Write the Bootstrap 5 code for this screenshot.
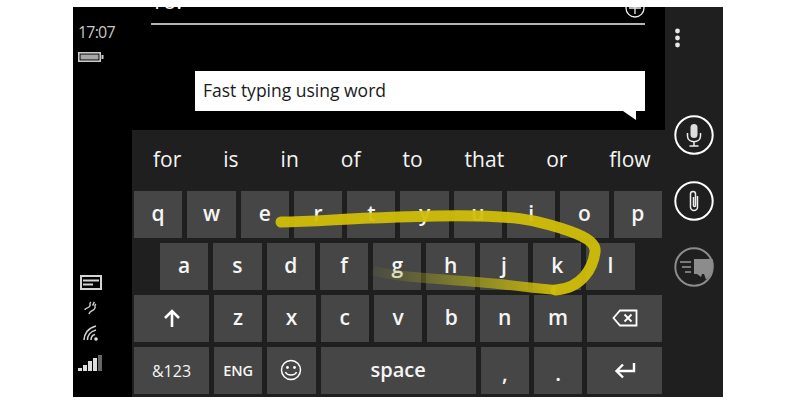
<!DOCTYPE html>
<html lang="en">
<head>
  <meta charset="UTF-8">
  <title>Word flow keyboard</title>
  <link href="https://cdn.jsdelivr.net/npm/bootstrap@5.3.0/dist/css/bootstrap.min.css" rel="stylesheet">
  <style>
    body {
      background: #fff;
      font-family: "Open Sans", "Liberation Sans", sans-serif;
    }
    .phone-frame {
      width: 650px;
      height: 390px;
      margin: 7px 0 0 73px;
      background: #000;
      color: #fff;
      overflow: hidden;
    }
    .status-col {
      width: 59px;
      padding: 16px 0 25px 5px;
      color: #c8c8c8;
    }
    .status-time { font-size: 16px; line-height: 18px; letter-spacing: -0.8px; }
    .status-batt { margin-top: 11px; }
    .status-icons { margin-top: auto; gap: 11px; }

    .centre-col { width: 533px; }
    .thread-area { height: 123px; padding-left: 19px; padding-right: 20px; }
    .to-row {
      height: 18px;
      border-bottom: 2px solid #b4b4b4;
      overflow: hidden;
      font-size: 22px;
    }
    .to-label { line-height: 22px; margin-top: -18px; }
    .plus-icon { margin-top: -10px; }
    .msg-bubble {
      margin: 46px 0 0 44px;
      height: 40px;
      background: #fff;
      color: #1a1a1a;
      font-size: 17.5px;
      line-height: 39px;
      padding-left: 8px;
    }
    .msg-tail {
      position: absolute;
      right: -1px;
      bottom: -10px;
    }

    .kb-panel {
      height: 267px;
      background: #1f1f1f;
      padding: 0 3px 3px 2px;
    }
    .word-row {
      height: 61px;
      gap: 42px;
      padding-left: 19px;
      font-size: 21px;
      line-height: 59px;
      color: #f4f4f4;
      white-space: nowrap;
    }
    .key-row { gap: 5px; height: 47px; margin-bottom: 5px; }
    .key-row:last-child { margin-bottom: 0; }
    .row-home { padding-left: 26px; }
    .kb-key {
      width: 48.3px;
      flex: none;
      background: #464646;
      display: flex;
      align-items: center;
      justify-content: center;
      font-size: 21px;
      font-weight: 600;
      color: #f5f5f5;
      padding-bottom: 2px;
    }
    .key-wide { width: 75px; }
    .key-space { width: 155px; font-size: 20px; }
    .key-small { font-size: 16px; font-weight: 500; padding-bottom: 0; }
    .key-eng { font-size: 14.5px; padding-bottom: 0; }
    .key-punct { padding-bottom: 5px; }

    .rail-col {
      width: 58px;
      background: #1f1f1f;
      padding-top: 21px;
    }
    .rail-dots { margin-left: 9px; }
    .rail-btns { margin-top: 66px; margin-left: 9px; gap: 26px; }

    .swipe-trail {
      position: absolute;
      left: 0;
      top: 0;
      pointer-events: none;
      filter: blur(0.6px);
    }
  </style>
</head>
<body>
  <div class="phone-frame d-flex position-relative">

    <!-- status bar -->
    <div class="status-col d-flex flex-column">
      <div class="status-time">17:07</div>
      <svg class="status-batt" width="26" height="10" viewBox="0 0 26 10">
        <rect x="0.8" y="0.8" width="21.4" height="8.4" fill="none" stroke="#ccc" stroke-width="1.6"/>
        <rect x="2.500" y="2.500" width="18" height="5" fill="#a8a8a8"/>
        <rect x="23.500" y="3" width="2" height="4" fill="#ccc"/>
      </svg>
      <div class="status-icons d-flex flex-column">
        <svg width="22" height="15" viewBox="0 0 22 15" style="margin-left:2px">
          <rect x="1" y="1" width="20" height="13" fill="none" stroke="#d4d4d4" stroke-width="2"/>
          <path d="M3 4.500h16v2H3zM3 8.500h10v2H3z" fill="#d4d4d4"/>
        </svg>
        <svg width="14" height="14" viewBox="0 0 14 14" style="margin-left:6px">
          <path d="M7 1C4 3 8 4 5 6S1 7 1 9M12 3C9 5 13 6 10 8.500S6 9.500 5 13M10.500 1C9 2.500 10 3 8.500 4.500" fill="none" stroke="#cfcfcf" stroke-width="1.500"/>
        </svg>
        <svg width="16" height="16" viewBox="0 0 16 16" style="margin-left:5px;margin-top:-1px">
          <path d="M1 15C1 9 5 3 13 1M4.500 15C4.500 11 7 6.500 13 5M8 15C8 12.500 9.500 10 12 9.500" fill="none" stroke="#d0d0d0" stroke-width="1.600"/>
          <circle cx="13" cy="14" r="1.800" fill="#e0e0e0"/>
        </svg>
        <svg width="26" height="18" viewBox="0 0 26 18" style="margin-top:2px">
          <rect x="0" y="14" width="4" height="3" fill="#ddd"/>
          <rect x="5" y="11" width="4" height="6" fill="#ddd"/>
          <rect x="10" y="7" width="4" height="10" fill="#ddd"/>
          <rect x="15" y="4" width="4" height="13" fill="#ddd"/>
          <rect x="20" y="1" width="4" height="16" fill="#666"/>
        </svg>
      </div>
    </div>

    <!-- message and keyboard -->
    <div class="centre-col d-flex flex-column">
      <div class="thread-area">
        <div class="to-row d-flex justify-content-between">
          <div class="to-label">To:</div>
          <svg class="plus-icon" width="20" height="27" viewBox="0 0 20 27">
            <circle cx="10" cy="11" r="9" fill="none" stroke="#eee" stroke-width="1.300"/>
            <path d="M10 5v12M4 11h12" stroke="#eee" stroke-width="1.300"/>
          </svg>
        </div>
        <div class="msg-bubble position-relative">
          Fast typing using word
          <svg class="msg-tail" width="24" height="10" viewBox="0 0 24 10">
            <path d="M1 0L14 9V0z" fill="#fff"/>
          </svg>
        </div>
      </div>

      <div class="kb-panel">
        <div class="word-row d-flex">
          <span>for</span><span>is</span><span>in</span><span>of</span><span>to</span><span>that</span><span>or</span><span>flow</span>
        </div>
        <div class="key-row d-flex">
          <div class="kb-key">q</div><div class="kb-key">w</div><div class="kb-key">e</div><div class="kb-key">r</div><div class="kb-key">t</div><div class="kb-key">y</div><div class="kb-key">u</div><div class="kb-key">i</div><div class="kb-key">o</div><div class="kb-key">p</div>
        </div>
        <div class="key-row row-home d-flex">
          <div class="kb-key">a</div><div class="kb-key">s</div><div class="kb-key">d</div><div class="kb-key">f</div><div class="kb-key">g</div><div class="kb-key">h</div><div class="kb-key">j</div><div class="kb-key">k</div><div class="kb-key">l</div>
        </div>
        <div class="key-row d-flex">
          <div class="kb-key key-wide">
            <svg width="20" height="20" viewBox="0 0 20 20"><path d="M10 19V3M3 10l7-7 7 7" fill="none" stroke="#fff" stroke-width="2.600"/></svg>
          </div>
          <div class="kb-key">z</div><div class="kb-key">x</div><div class="kb-key">c</div><div class="kb-key">v</div><div class="kb-key">b</div><div class="kb-key">n</div><div class="kb-key">m</div>
          <div class="kb-key key-wide">
            <svg width="26" height="18" viewBox="0 0 26 18"><path d="M8 1.500H24.500V16.500H8L1.500 9z" fill="none" stroke="#fff" stroke-width="1.800"/><path d="M12.500 5.500l7 7M19.500 5.500l-7 7" stroke="#fff" stroke-width="1.800"/></svg>
          </div>
        </div>
        <div class="key-row d-flex">
          <div class="kb-key key-wide key-small">&amp;123</div>
          <div class="kb-key key-eng">ENG</div>
          <div class="kb-key">
            <svg width="22" height="22" viewBox="0 0 22 22"><circle cx="11" cy="11" r="9.500" fill="none" stroke="#fff" stroke-width="1.500"/><circle cx="7.500" cy="8.500" r="1.400" fill="#fff"/><circle cx="14.500" cy="8.500" r="1.400" fill="#fff"/><path d="M5.500 13c1.500 4 9.500 4 11 0" fill="none" stroke="#fff" stroke-width="1.500"/></svg>
          </div>
          <div class="kb-key key-space">space</div>
          <div class="kb-key key-punct align-items-end">,</div>
          <div class="kb-key key-punct align-items-end">.</div>
          <div class="kb-key key-wide">
            <svg width="22" height="18" viewBox="0 0 22 18"><path d="M20 2V10H3M9 3.500L2.500 10 9 16.500" fill="none" stroke="#fff" stroke-width="2.400"/></svg>
          </div>
        </div>
      </div>
    </div>

    <!-- right rail -->
    <div class="rail-col">
      <svg class="rail-dots d-block" width="7" height="21" viewBox="0 0 7 21">
        <circle cx="3.500" cy="3" r="2.400" fill="#e8e8e8"/><circle cx="3.500" cy="10" r="2.400" fill="#e8e8e8"/><circle cx="3.500" cy="17" r="2.400" fill="#e8e8e8"/>
      </svg>
      <div class="rail-btns d-flex flex-column">
        <svg width="40" height="40" viewBox="0 0 40 40">
          <circle cx="20" cy="20" r="18.700" fill="none" stroke="#fff" stroke-width="2"/>
          <rect x="16.500" y="9" width="7" height="14" rx="3.500" fill="#ddd"/>
          <path d="M13.500 18v3c0 7.500 13 7.500 13 0v-3M20 27v4M15.500 31h9" fill="none" stroke="#eee" stroke-width="1.500"/>
        </svg>
        <svg width="40" height="40" viewBox="0 0 40 40">
          <circle cx="20" cy="20" r="18.700" fill="none" stroke="#fff" stroke-width="2"/>
          <path d="M23.500 15v11a3.500 3.500 0 0 1-7 0V13a2.500 2.500 0 0 1 5 0v11.500a1 1 0 0 1-2 0V16" fill="none" stroke="#eee" stroke-width="1.500"/>
        </svg>
        <svg width="40" height="40" viewBox="0 0 40 40">
          <circle cx="20" cy="20" r="18.700" fill="none" stroke="#8c8c8c" stroke-width="2"/>
          <path d="M20 12H38.500A18 18 0 0 1 32 32.500L30 27H28L27 30 23 27H20z" fill="#8c8c8c"/>
          <path d="M6 15H17M8 20H17M11 25H17" stroke="#999" stroke-width="1.500"/>
        </svg>
      </div>
    </div>

    <!-- swipe trail, drawn over the keys -->
    <svg class="swipe-trail" width="650" height="390" viewBox="73 7 650 390">
      <defs>
        <linearGradient id="trailFade" gradientUnits="userSpaceOnUse" x1="372" y1="0" x2="557" y2="0">
          <stop offset="0" stop-color="#8a8a20" stop-opacity="0.08"/>
          <stop offset="0.45" stop-color="#a6a21c" stop-opacity="0.6"/>
          <stop offset="1" stop-color="#d2be08" stop-opacity="0.95"/>
        </linearGradient>
      </defs>
      <path d="M373 270C390 277 440 279 477 282S530 288 556 290" fill="none" stroke="url(#trailFade)" stroke-width="10"/>
      <path d="M281 222C310 222 340 219 370 218S440 215 477 216S530 219 550 225C575 232 597 240 595 252C593 268 582 288 556 290" fill="none" stroke="#d2be08" stroke-opacity="0.95" stroke-width="11" stroke-linecap="round"/>
    </svg>
  </div>

  <script src="https://cdn.jsdelivr.net/npm/bootstrap@5.3.0/dist/js/bootstrap.bundle.min.js"></script>
</body>
</html>
